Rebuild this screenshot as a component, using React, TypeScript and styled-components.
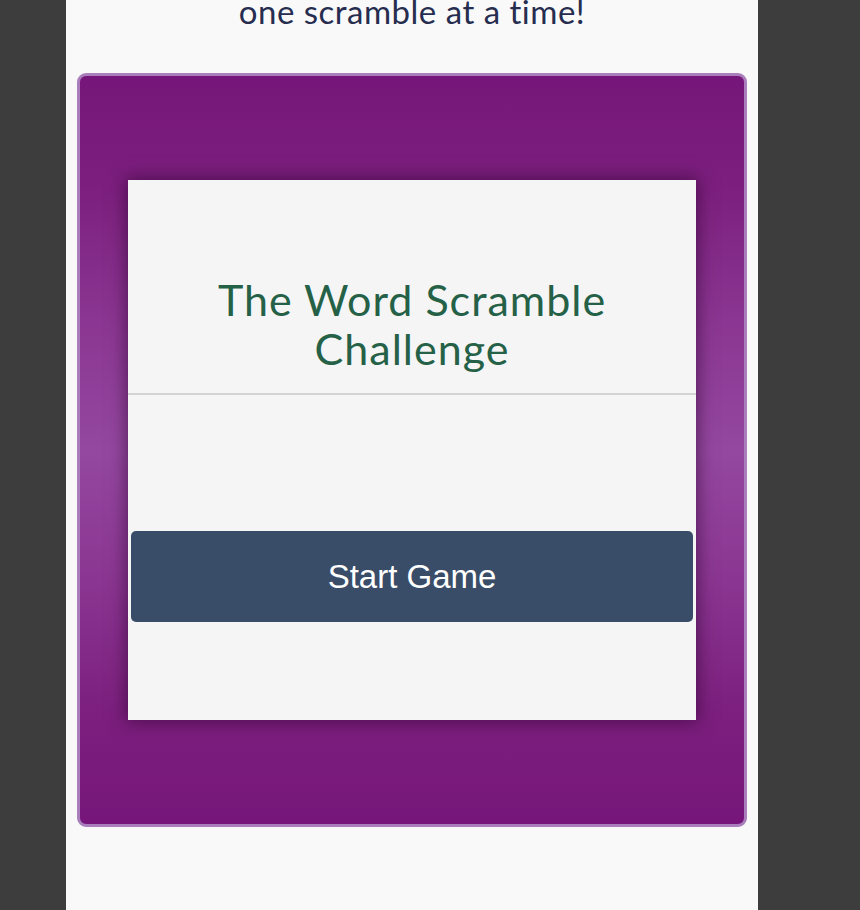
import React from "react";
import styled, { createGlobalStyle } from "styled-components";

const Global = createGlobalStyle`
  html, body {
    margin: 0;
    padding: 0;
    background: #3d3d3d;
    overflow: hidden;
  }
  * { box-sizing: border-box; }
`;

const Column = styled.main`
  width: 692px;
  min-height: 910px;
  margin-left: 66px;
  background: #f9f9fa;
  display: flex;
  flex-direction: column;
  align-items: stretch;
  padding: 0 11px;
`;

const Tagline = styled.p`
  margin: -8px 0 0;
  height: 81px;
  text-align: center;
  font-family: Lato, "Liberation Sans", sans-serif;
  font-size: 33px;
  letter-spacing: 0.5px;
  line-height: 38px;
  color: #262d4f;
`;

const Stage = styled.section`
  height: 754px;
  border: 3px solid #a97fbb;
  border-radius: 9px;
  background: linear-gradient(
    to bottom,
    #76167a 0%,
    #7c1f7e 15%,
    #8a3591 32%,
    #9448a0 50%,
    #8a3591 68%,
    #7c1f7e 85%,
    #76167a 100%
  );
  padding: 104px 48px;
  display: flex;
  flex-direction: column;
`;

const Card = styled.div`
  flex: 1;
  background: #f5f5f6;
  box-shadow: 0 0 16px 2px rgba(40, 0, 40, 0.55);
  display: flex;
  flex-direction: column;
`;

const TitleArea = styled.header`
  padding: 95px 10px 20px;
  border-bottom: 2px solid #d3d3d5;
`;

const Title = styled.h1`
  margin: 0;
  text-align: center;
  font-family: Lato, "Liberation Sans", sans-serif;
  font-weight: 400;
  font-size: 43px;
  letter-spacing: 1px;
  line-height: 49px;
  color: #256147;
`;

const Body = styled.div`
  flex: 1;
  padding: 136px 3px 0;
`;

const StartButton = styled.button`
  width: 100%;
  height: 91px;
  border: none;
  border-radius: 5px;
  background: #3a4d68;
  color: #ffffff;
  font-family: "Liberation Sans", Arial, sans-serif;
  font-size: 33px;
  cursor: pointer;
`;

export default function App() {
  return (
    <>
      <Global />
      <Column>
        <Tagline>one scramble at a time!</Tagline>
        <Stage>
          <Card>
            <TitleArea>
              <Title>
                The Word Scramble
                <br />
                Challenge
              </Title>
            </TitleArea>
            <Body>
              <StartButton>Start Game</StartButton>
            </Body>
          </Card>
        </Stage>
      </Column>
    </>
  );
}
